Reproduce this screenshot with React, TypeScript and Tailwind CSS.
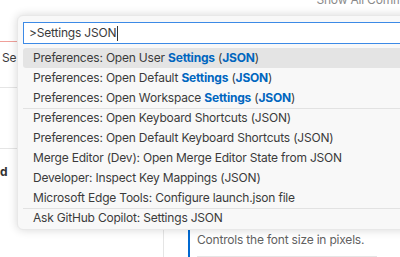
type Part = { text: string; hl?: boolean }

type Item = {
  parts: Part[]
  separator?: boolean
}

const items: Item[] = [
  {
    parts: [
      { text: 'Preferences: Open User ' },
      { text: 'Settings', hl: true },
      { text: ' (' },
      { text: 'JSON', hl: true },
      { text: ')' },
    ],
  },
  {
    parts: [
      { text: 'Preferences: Open Default ' },
      { text: 'Settings', hl: true },
      { text: ' (' },
      { text: 'JSON', hl: true },
      { text: ')' },
    ],
  },
  {
    parts: [
      { text: 'Preferences: Open Workspace ' },
      { text: 'Settings', hl: true },
      { text: ' (' },
      { text: 'JSON', hl: true },
      { text: ')' },
    ],
  },
  { parts: [{ text: 'Preferences: Open Keyboard Shortcuts (JSON)' }], separator: true },
  { parts: [{ text: 'Preferences: Open Default Keyboard Shortcuts (JSON)' }] },
  { parts: [{ text: 'Merge Editor (Dev): Open Merge Editor State from JSON' }] },
  { parts: [{ text: 'Developer: Inspect Key Mappings (JSON)' }] },
  { parts: [{ text: 'Microsoft Edge Tools: Configure launch.json file' }] },
  { parts: [{ text: 'Ask GitHub Copilot: Settings JSON' }], separator: true },
]

function QuickPick() {
  return (
    <div className="absolute left-[17px] top-[15px] h-[215px] w-[600px] rounded-md border border-[#e8e8e8] bg-[#f8f8f8] px-[5px] pt-[6px] shadow-[0_0_10px_rgba(0,0,0,0.16)]">
      <div className="flex h-[22px] items-center border border-[#3c8ae6] bg-white pl-[5px] text-[12px] text-[#3b3b3b]">
        <span>&gt;Settings JSON</span>
        <span className="ml-[1px] h-[15px] w-px bg-[#333]" />
      </div>
      <div className="mt-[4px]">
        {items.map((item, i) => (
          <div
            key={i}
            className={[
              'relative flex h-[20px] items-center pl-[10px] text-[12px] text-[#3b3b3b]',
              i === 0 ? 'rounded-[3px] bg-[#e4e4e4]' : '',
            ].join(' ')}
          >
            {item.separator && <div className="absolute left-0 right-0 top-0 h-px bg-[#e2e2e2]" />}
            <span className="whitespace-pre">
              {item.parts.map((p, j) =>
                p.hl ? (
                  <span key={j} className="font-bold text-[#0066bf]">
                    {p.text}
                  </span>
                ) : (
                  <span key={j}>{p.text}</span>
                ),
              )}
            </span>
          </div>
        ))}
      </div>
    </div>
  )
}

export default function App() {
  return (
    <div
      className="relative h-[257px] w-[400px] overflow-hidden bg-white tracking-[-0.2px]"
      style={{ fontFamily: 'Inter, "Liberation Sans", sans-serif' }}
    >
      <div className="flex h-full">
        {/* settings table of contents, mostly hidden */}
        <div className="flex w-[17px] shrink-0 flex-col">
          <div className="mt-[41px] h-px bg-[#f0a09a]" />
          <div className="mt-[8px] pl-[2px] text-[12px] leading-[16px] text-[#3b3b3b] whitespace-nowrap">Se</div>
          <div className="mt-[21px] h-px bg-[#e5e5e5]" />
          <div className="mt-[60px] h-px bg-[#e5e5e5]" />
          <div className="mt-[15px] text-[12px] font-bold leading-[16px] text-[#333]">d</div>
        </div>
        <div className="flex flex-1 flex-col">
          <div className="-mt-[9px] flex justify-end text-[12px] text-[#8a8a8a] whitespace-nowrap">
            <span className="-mr-[30px]">Show All Commands</span>
          </div>
          <div className="mt-auto flex h-[29px]">
            <div className="ml-[146px] h-full w-px bg-[#e5e5e5]" />
            <div className="ml-[24px] h-full w-[2px] bg-[#0069d1]" />
            <div className="ml-[7px] flex w-[180px] flex-col">
              <div className="mt-[4px] text-[12px] leading-[16px] text-[#616161] whitespace-nowrap">
                Controls the font size in pixels.
              </div>
              <div className="mt-auto h-px bg-[#e5e5e5]" />
            </div>
          </div>
        </div>
      </div>
      <QuickPick />
    </div>
  )
}
